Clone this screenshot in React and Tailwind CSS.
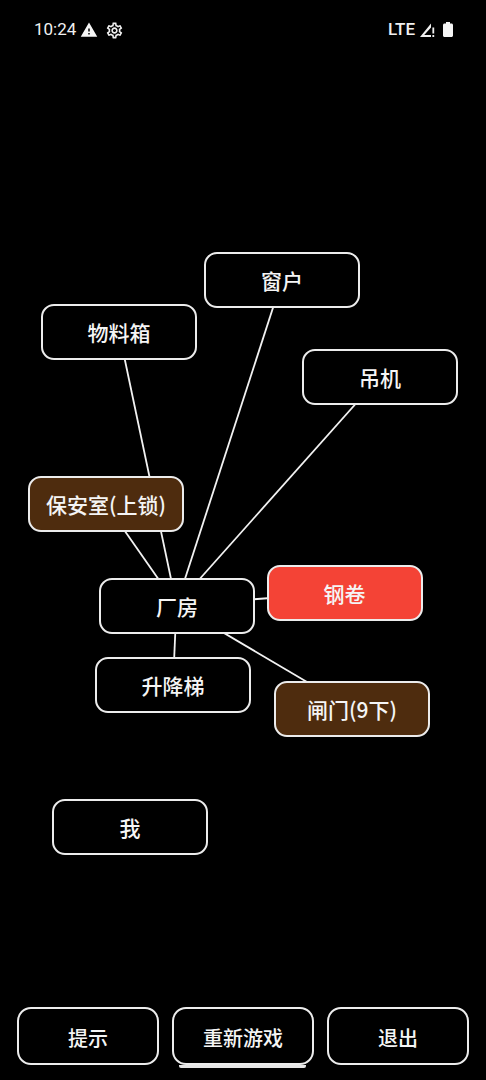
const links = [
  [282, 220],
  [119, 272],
  [380, 316.5],
  [106, 444],
  [344.5, 532.5],
  [173, 625],
  [352, 648.5],
];

const Node = ({ className, children }) => (
  <div
    className={`absolute flex h-[56px] w-[156px] items-center justify-center rounded-[13px] border-2 border-[#ececec] pt-[2px] text-[21px] font-medium text-[#f5f5f5] ${className}`}
  >
    {children}
  </div>
);

const BottomButton = ({ children }) => (
  <button className="flex h-[58px] flex-1 items-center justify-center rounded-[14px] border-2 border-[#ececec] bg-black pt-[4px] text-[20px] font-medium text-[#f5f5f5]">
    {children}
  </button>
);

export default function App() {
  return (
    <div className="flex h-[1080px] w-[486px] flex-col overflow-hidden bg-black font-['Noto_Sans_CJK_SC',sans-serif]">
      <div className="flex h-[60px] shrink-0 items-center justify-between pl-[34px] pr-[33px] font-['Roboto',sans-serif] text-[17px] text-[#f0f0f0]">
        <div className="flex items-center">
          <span>10:24</span>
          <svg viewBox="0 0 24 24" className="ml-[4px] h-[18px] w-[18px]" fill="#f5f5f5">
            <path d="M1 21h22L12 2 1 21zm12-3h-2v-2h2v2zm0-4h-2v-4h2v4z" />
          </svg>
          <svg viewBox="0 0 24 24" className="ml-[7px] h-[19px] w-[19px]" fill="#f0f0f0">
            <path d="M19.43 12.98c.04-.32.07-.64.07-.98s-.03-.66-.07-.98l2.11-1.65c.19-.15.24-.42.12-.64l-2-3.46c-.12-.22-.39-.3-.61-.22l-2.49 1c-.52-.4-1.08-.73-1.69-.98l-.38-2.65C14.46 2.18 14.25 2 14 2h-4c-.25 0-.46.18-.49.42l-.38 2.65c-.61.25-1.17.59-1.69.98l-2.49-1c-.23-.09-.49 0-.61.22l-2 3.46c-.13.22-.07.49.12.64l2.11 1.65c-.04.32-.07.65-.07.98s.03.66.07.98l-2.11 1.65c-.19.15-.24.42-.12.64l2 3.46c.12.22.39.3.61.22l2.49-1c.52.4 1.08.73 1.69.98l.38 2.65c.03.24.24.42.49.42h4c.25 0 .46-.18.49-.42l.38-2.65c.61-.25 1.17-.59 1.69-.98l2.49 1c.23.09.49 0 .61-.22l2-3.46c.12-.22.07-.49-.12-.64l-2.11-1.65zM17.45 11.27c.04.31.05.52.05.73 0 .21-.02.43-.05.73l-.14 1.13.89.7 1.08.84-.7 1.21-1.27-.51-1.04-.42-.9.68c-.43.32-.84.56-1.25.73l-1.06.43-.16 1.13-.2 1.35h-1.4l-.19-1.35-.16-1.13-1.06-.43c-.43-.18-.83-.41-1.23-.71l-.91-.7-1.06.43-1.27.51-.7-1.21 1.08-.84.89-.7-.14-1.13c-.03-.31-.05-.54-.05-.74s.02-.43.05-.73l.14-1.13-.89-.7-1.08-.84.7-1.21 1.27.51 1.04.42.9-.68c.43-.32.84-.56 1.25-.73l1.06-.43.16-1.13.2-1.35h1.39l.19 1.35.16 1.13 1.06.43c.43.18.83.41 1.23.71l.91.7 1.06-.43 1.27-.51.7 1.21-1.07.85-.89.7.14 1.13zM12 8c-2.21 0-4 1.79-4 4s1.79 4 4 4 4-1.79 4-4-1.79-4-4-4zm0 6c-1.1 0-2-.9-2-2s.9-2 2-2 2 .9 2 2-.9 2-2 2z" />
          </svg>
        </div>
        <div className="flex items-center">
          <span className="font-medium">LTE</span>
          <svg viewBox="0 0 15 14" className="ml-[5px] h-[14px] w-[15px]" fill="#f0f0f0">
            <path d="M0 14 11 .5v4L4.200 12H11v2z" />
            <rect x="12.400" y="4.500" width="1.800" height="6" />
            <rect x="12.400" y="12" width="1.800" height="2" />
          </svg>
          <svg viewBox="0 0 10 15" className="ml-[8px] mb-[1px] h-[15px] w-[10px]" fill="#f5f5f5">
            <path d="M3 0h4v1.500h1.500c.8 0 1.500.7 1.500 1.500v10.500c0 .8-.7 1.500-1.500 1.500h-7C.7 15 0 14.300 0 13.500V3c0-.8.7-1.500 1.500-1.500H3z" />
          </svg>
        </div>
      </div>

      <div className="relative flex-1">
        <svg className="absolute inset-0 h-full w-full" stroke="#f2f2f2" strokeWidth="1.8">
          {links.map(([x, y]) => (
            <line key={`${x}-${y}`} x1="176.500" y1="545" x2={x} y2={y} />
          ))}
        </svg>
        <Node className="left-[204px] top-[192px] bg-black">窗户</Node>
        <Node className="left-[41px] top-[244px] bg-black">物料箱</Node>
        <Node className="left-[302px] top-[288.500px] bg-black">吊机</Node>
        <Node className="left-[28px] top-[416px] bg-[#4e2c0e]">保安室(上锁)</Node>
        <Node className="left-[99px] top-[517.500px] bg-black">厂房</Node>
        <Node className="left-[266.500px] top-[504.500px] bg-[#f44336]">钢卷</Node>
        <Node className="left-[95px] top-[597px] bg-black">升降梯</Node>
        <Node className="left-[274px] top-[620.500px] bg-[#4e2c0e]">闸门(9下)</Node>
        <Node className="left-[52px] top-[739px] bg-black">我</Node>
      </div>

      <div className="relative flex shrink-0 gap-[13px] px-[17px] pb-[15px]">
        <BottomButton>提示</BottomButton>
        <BottomButton>重新游戏</BottomButton>
        <BottomButton>退出</BottomButton>
        <div className="absolute bottom-[12px] left-[179px] h-[3px] w-[127px] rounded-b-[2px] bg-[#e6e6e6]" />
      </div>
    </div>
  );
}
